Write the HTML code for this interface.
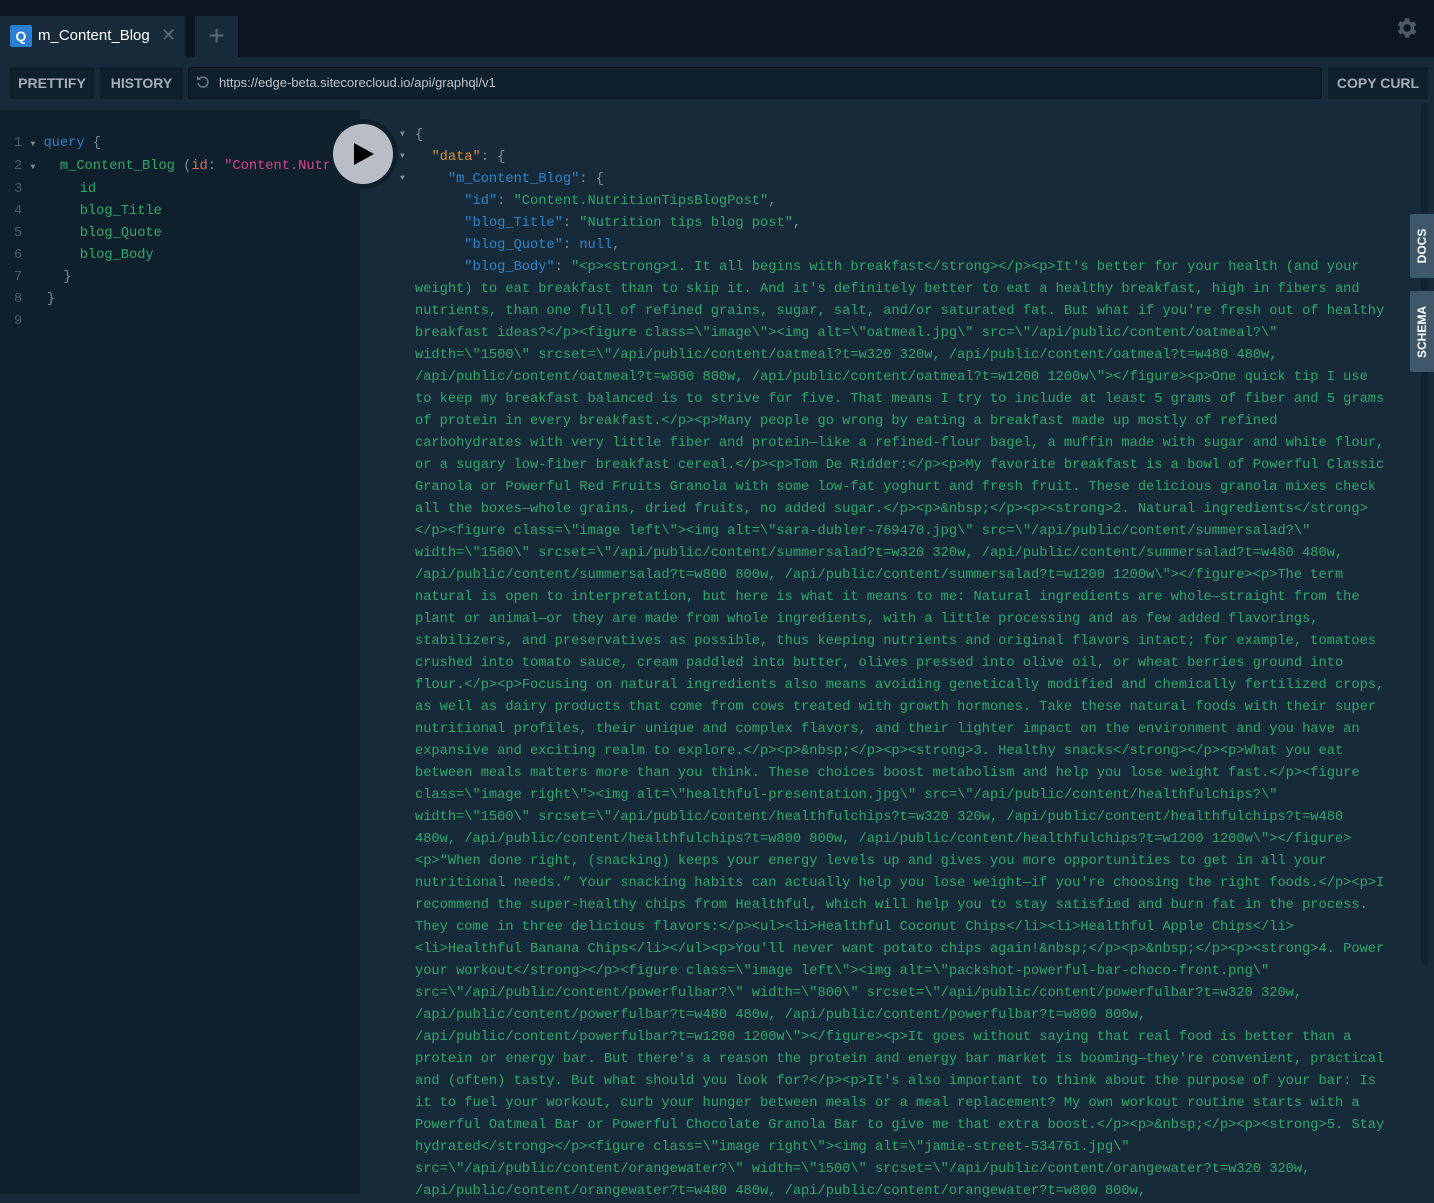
<!DOCTYPE html>
<html><head><meta charset="utf-8"><style>
*{margin:0;padding:0;box-sizing:border-box}
body{width:1434px;height:1194px;overflow:hidden;background:#172a3a;font-family:"Liberation Sans",sans-serif;position:relative}
.top{position:absolute;left:0;top:0;width:1434px;height:57px;background:#0b1621}
.tab{position:absolute;left:0;top:16px;width:185px;height:41px;background:#172a3a}
.q{position:absolute;left:10px;top:25px;width:22px;height:22px;background:#2a7ed3;border-radius:2px;color:#fff;font-weight:bold;font-size:14px;text-align:center;line-height:22px}
.tabt{position:absolute;left:38px;top:27px;color:#fff;font-size:15px}
.x{position:absolute;left:161px;top:25px;color:#5b6a77;font-size:18px}
.plus{position:absolute;left:195px;top:16px;width:43px;height:41px;background:#172a3a;color:#5b6a77;font-size:28px;text-align:center;line-height:40px}
.btn{position:absolute;top:67px;height:32px;background:#0f202d;border-radius:2px;color:#a4adb5;font-weight:bold;font-size:14px;line-height:32px;text-align:center}
.url{position:absolute;left:188px;top:67px;width:1134px;height:32px;background:#0f202d;border:1px solid #0a141d;border-radius:3px;color:#bcc3c9;font-size:13px;line-height:30px;padding-left:30px}
.left{position:absolute;left:0;top:110px;width:360px;height:1084px;background:#0f202d}
pre{font-family:"Liberation Mono",monospace;font-size:13.7px;line-height:22px;position:absolute;white-space:pre}
.ln{color:#4a5966}
.g{color:#2ea86d}.b{color:#2d86cc}.p{color:#7d8b97}.o{color:#dd9128}.pk{color:#d64292}.r{color:#e0695b}.kw{color:#2f7fc8}
.play{position:absolute;left:328px;top:119px;width:70px;height:70px;border-radius:50%;background:#0f202d}
.play i{position:absolute;left:5px;top:5px;width:60px;height:60px;border-radius:50%;background:#b9bec6}
.side{position:absolute;left:1410px;width:24px;background:#3f5869;border-radius:2px 0 0 2px;color:#fff;font-weight:bold;font-size:12px}
.side span{position:absolute;left:50%;top:50%;transform:translate(-50%,-50%) rotate(-90deg);white-space:nowrap}
.sb{position:absolute;left:1421px;top:103px;width:7px;height:862px;background:#13232f;border-radius:3px}
</style></head><body>
<div class="top"></div>
<div class="tab"></div>
<div class="q">Q</div><div class="tabt">m_Content_Blog</div><div class="x">✕</div>
<div class="plus">+</div>
<svg style="position:absolute;left:1393px;top:15px" width="26" height="26" viewBox="0 0 24 24"><path fill="#4c5a66" d="M19.4 13a7.5 7.5 0 0 0 0-2l2.1-1.6-2-3.5-2.5 1a7.4 7.4 0 0 0-1.700-1L15 3h-4l-.4 2.7a7.4 7.4 0 0 0-1.7 1l-2.5-1-2 3.5L6.6 11a7.5 7.5 0 0 0 0 2l-2.1 1.6 2 3.5 2.5-1a7.4 7.4 0 0 0 1.7 1L11 21h4l.4-2.7a7.4 7.4 0 0 0 1.7-1l2.5 1 2-3.5zM13 15.5a3.5 3.5 0 1 1 0-7 3.5 3.5 0 0 1 0 7z"/></svg>
<div class="btn" style="left:10px;width:84px">PRETTIFY</div>
<div class="btn" style="left:100px;width:83px">HISTORY</div>
<div class="url">https://edge-beta.sitecorecloud.io/api/graphql/v1</div>
<svg style="position:absolute;left:196px;top:75px" width="14" height="14" viewBox="0 0 14 14"><path d="M3 4A5 5 0 1 1 2 8" fill="none" stroke="#6b7883" stroke-width="1.5"/><path d="M1 1v4h4z" fill="#6b7883"/></svg>
<div class="btn" style="left:1328px;width:100px">COPY CURL</div>
<div class="left"></div>
<pre style="left:14px;top:133px"><span class="ln">1</span> <span class="p" style="font-size:8px">▼</span> <span class="kw">query</span> <span class="p">{</span>
<span class="ln">2</span> <span class="p" style="font-size:8px">▼</span>   <span class="g">m_Content_Blog</span> <span class="p">(</span><span class="r">id</span><span class="p">:</span> <span class="pk">"Content.Nutr</span>
<span class="ln">3</span>       <span class="g">id</span>
<span class="ln">4</span>       <span class="g">blog_Title</span>
<span class="ln">5</span>       <span class="g">blog_Quote</span>
<span class="ln">6</span>       <span class="g">blog_Body</span>
<span class="ln">7</span>     <span class="p">}</span>
<span class="ln">8</span>   <span class="p">}</span>
<span class="ln">9</span></pre>
<div class="play"><i></i><svg style="position:absolute;left:26px;top:24px" width="20" height="22" viewBox="0 0 20 22"><path d="M0 0L20 11L0 22z" fill="#000"/></svg></div>
<pre style="left:400px;top:124px;font-size:8px;line-height:22px" class="p">▼
▼
▼</pre>
<pre style="left:415px;top:125px" class="g"><span class="p">{</span>
  <span class="o">"data"</span><span class="p">: {</span>
    <span class="b">"m_Content_Blog"</span><span class="p">: {</span>
      <span class="b">"id"</span><span class="p">:</span> "Content.NutritionTipsBlogPost"<span class="p">,</span>
      <span class="b">"blog_Title"</span><span class="p">:</span> "Nutrition tips blog post"<span class="p">,</span>
      <span class="b">"blog_Quote"</span><span class="p">:</span> <span class="b">null</span><span class="p">,</span>
      <span class="b">"blog_Body"</span><span class="p">:</span> "&lt;p&gt;&lt;strong&gt;1. It all begins with breakfast&lt;/strong&gt;&lt;/p&gt;&lt;p&gt;It's better for your health (and your
weight) to eat breakfast than to skip it. And it's definitely better to eat a healthy breakfast, high in fibers and
nutrients, than one full of refined grains, sugar, salt, and/or saturated fat. But what if you're fresh out of healthy
breakfast ideas?&lt;/p&gt;&lt;figure class=\"image\"&gt;&lt;img alt=\"oatmeal.jpg\" src=\"/api/public/content/oatmeal?\"
width=\"1500\" srcset=\"/api/public/content/oatmeal?t=w320 320w, /api/public/content/oatmeal?t=w480 480w,
/api/public/content/oatmeal?t=w800 800w, /api/public/content/oatmeal?t=w1200 1200w\"&gt;&lt;/figure&gt;&lt;p&gt;One quick tip I use
to keep my breakfast balanced is to strive for five. That means I try to include at least 5 grams of fiber and 5 grams
of protein in every breakfast.&lt;/p&gt;&lt;p&gt;Many people go wrong by eating a breakfast made up mostly of refined
carbohydrates with very little fiber and protein—like a refined-flour bagel, a muffin made with sugar and white flour,
or a sugary low-fiber breakfast cereal.&lt;/p&gt;&lt;p&gt;Tom De Ridder:&lt;/p&gt;&lt;p&gt;My favorite breakfast is a bowl of Powerful Classic
Granola or Powerful Red Fruits Granola with some low-fat yoghurt and fresh fruit. These delicious granola mixes check
all the boxes—whole grains, dried fruits, no added sugar.&lt;/p&gt;&lt;p&gt;&amp;nbsp;&lt;/p&gt;&lt;p&gt;&lt;strong&gt;2. Natural ingredients&lt;/strong&gt;
&lt;/p&gt;&lt;figure class=\"image left\"&gt;&lt;img alt=\"sara-dubler-769470.jpg\" src=\"/api/public/content/summersalad?\"
width=\"1500\" srcset=\"/api/public/content/summersalad?t=w320 320w, /api/public/content/summersalad?t=w480 480w,
/api/public/content/summersalad?t=w800 800w, /api/public/content/summersalad?t=w1200 1200w\"&gt;&lt;/figure&gt;&lt;p&gt;The term
natural is open to interpretation, but here is what it means to me: Natural ingredients are whole—straight from the
plant or animal—or they are made from whole ingredients, with a little processing and as few added flavorings,
stabilizers, and preservatives as possible, thus keeping nutrients and original flavors intact; for example, tomatoes
crushed into tomato sauce, cream paddled into butter, olives pressed into olive oil, or wheat berries ground into
flour.&lt;/p&gt;&lt;p&gt;Focusing on natural ingredients also means avoiding genetically modified and chemically fertilized crops,
as well as dairy products that come from cows treated with growth hormones. Take these natural foods with their super
nutritional profiles, their unique and complex flavors, and their lighter impact on the environment and you have an
expansive and exciting realm to explore.&lt;/p&gt;&lt;p&gt;&amp;nbsp;&lt;/p&gt;&lt;p&gt;&lt;strong&gt;3. Healthy snacks&lt;/strong&gt;&lt;/p&gt;&lt;p&gt;What you eat
between meals matters more than you think. These choices boost metabolism and help you lose weight fast.&lt;/p&gt;&lt;figure
class=\"image right\"&gt;&lt;img alt=\"healthful-presentation.jpg\" src=\"/api/public/content/healthfulchips?\"
width=\"1500\" srcset=\"/api/public/content/healthfulchips?t=w320 320w, /api/public/content/healthfulchips?t=w480
480w, /api/public/content/healthfulchips?t=w800 800w, /api/public/content/healthfulchips?t=w1200 1200w\"&gt;&lt;/figure&gt;
&lt;p&gt;“When done right, (snacking) keeps your energy levels up and gives you more opportunities to get in all your
nutritional needs.” Your snacking habits can actually help you lose weight—if you're choosing the right foods.&lt;/p&gt;&lt;p&gt;I
recommend the super-healthy chips from Healthful, which will help you to stay satisfied and burn fat in the process.
They come in three delicious flavors:&lt;/p&gt;&lt;ul&gt;&lt;li&gt;Healthful Coconut Chips&lt;/li&gt;&lt;li&gt;Healthful Apple Chips&lt;/li&gt;
&lt;li&gt;Healthful Banana Chips&lt;/li&gt;&lt;/ul&gt;&lt;p&gt;You'll never want potato chips again!&amp;nbsp;&lt;/p&gt;&lt;p&gt;&amp;nbsp;&lt;/p&gt;&lt;p&gt;&lt;strong&gt;4. Power
your workout&lt;/strong&gt;&lt;/p&gt;&lt;figure class=\"image left\"&gt;&lt;img alt=\"packshot-powerful-bar-choco-front.png\"
src=\"/api/public/content/powerfulbar?\" width=\"800\" srcset=\"/api/public/content/powerfulbar?t=w320 320w,
/api/public/content/powerfulbar?t=w480 480w, /api/public/content/powerfulbar?t=w800 800w,
/api/public/content/powerfulbar?t=w1200 1200w\"&gt;&lt;/figure&gt;&lt;p&gt;It goes without saying that real food is better than a
protein or energy bar. But there's a reason the protein and energy bar market is booming—they're convenient, practical
and (often) tasty. But what should you look for?&lt;/p&gt;&lt;p&gt;It's also important to think about the purpose of your bar: Is
it to fuel your workout, curb your hunger between meals or a meal replacement? My own workout routine starts with a
Powerful Oatmeal Bar or Powerful Chocolate Granola Bar to give me that extra boost.&lt;/p&gt;&lt;p&gt;&amp;nbsp;&lt;/p&gt;&lt;p&gt;&lt;strong&gt;5. Stay
hydrated&lt;/strong&gt;&lt;/p&gt;&lt;figure class=\"image right\"&gt;&lt;img alt=\"jamie-street-534761.jpg\"
src=\"/api/public/content/orangewater?\" width=\"1500\" srcset=\"/api/public/content/orangewater?t=w320 320w,
/api/public/content/orangewater?t=w480 480w, /api/public/content/orangewater?t=w800 800w,</pre>
<div class="sb"></div>
<div class="side" style="top:214px;height:64px"><span>DOCS</span></div>
<div class="side" style="top:291px;height:81px"><span>SCHEMA</span></div>
</body></html>
